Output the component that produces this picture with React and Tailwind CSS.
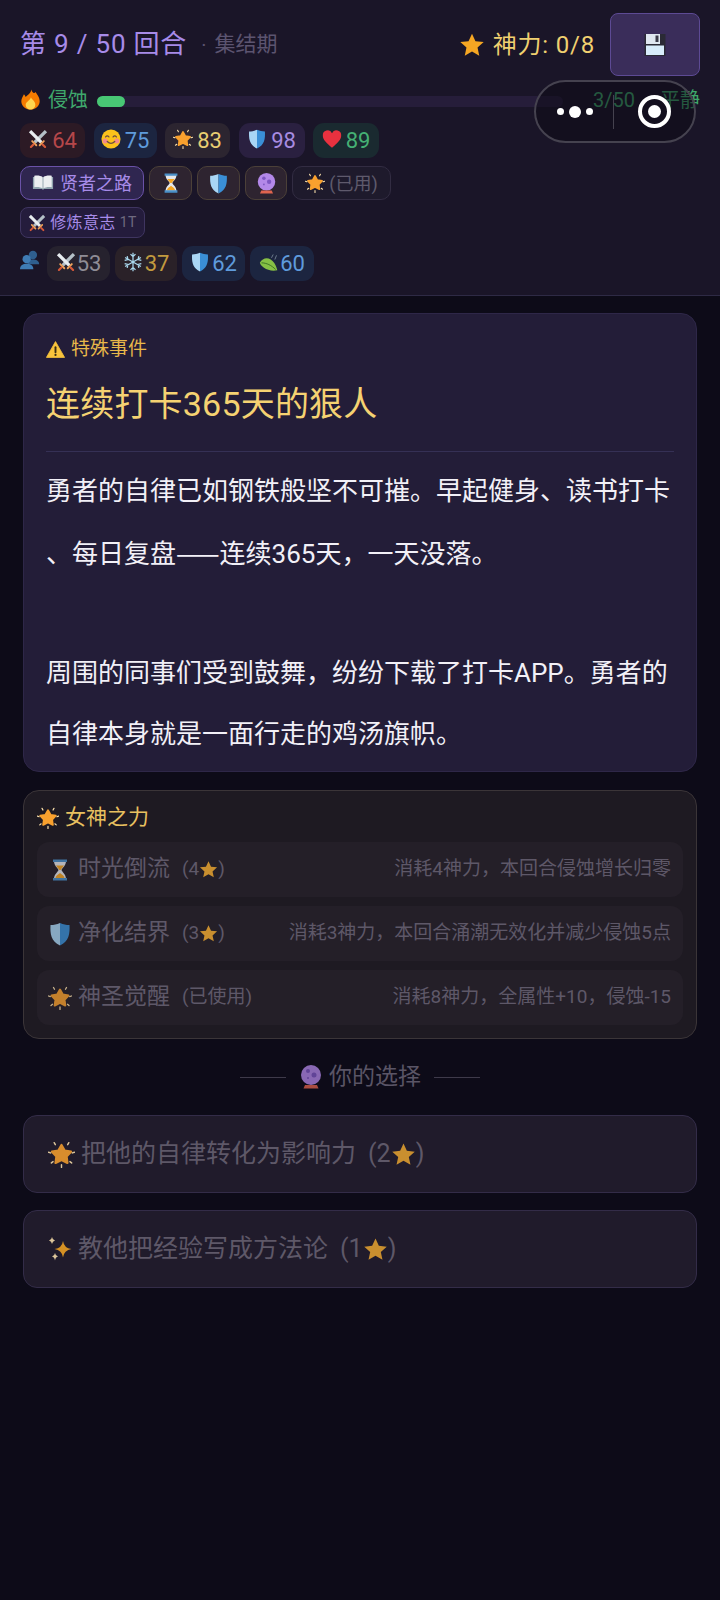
import React from 'react';

const font = { fontFamily: 'Roboto, "Noto Sans CJK SC", sans-serif' };

const Star = ({ s = 24, className = '', fill = '#f5a623' }) => (
  <svg width={s} height={s} viewBox="0 0 24 24" className={`inline-block shrink-0 ${className}`}>
    <path d="M12 1.500l3.200 7 7.600.8-5.700 5.100 1.600 7.500L12 18l-6.700 3.900 1.600-7.500L1.200 9.300l7.600-.8z" fill={fill} />
  </svg>
);

const Glow = ({ s = 24, className = '' }) => (
  <svg width={s} height={s} viewBox="0 0 24 24" className={`inline-block shrink-0 ${className}`}>
    <path d="M12 3.500l2.800 5 5.700 1-4 4.200.8 5.800-5.300-2.600-5.300 2.600.8-5.800-4-4.200 5.700-1z" fill="#f9a12e" stroke="#f9a12e" strokeWidth="2" strokeLinejoin="round" />
    <path d="M12 21v2.500M.5 10l1.800.6M21.700 10.600l1.800-.6M3 19.500l1.500-1.200M21 19.500l-1.500-1.200M5.500 1.500l1 1.800M18.500 1.500l-1 1.800" stroke="#fde3ae" strokeWidth="1.300" strokeLinecap="round" />
  </svg>
);

const Swords = ({ s = 24, className = '' }) => (
  <svg width={s} height={s} viewBox="0 0 24 24" className={`inline-block shrink-0 ${className}`}>
    <path d="M21.500 2.500L8 16" stroke="#b4c0c7" strokeWidth="4" />
    <path d="M2.500 2.500L16 16" stroke="#e8edf0" strokeWidth="4" />
    <path d="M5 14.500l5 5M19 14.500l-5 5" stroke="#eea35c" strokeWidth="2.200" strokeLinecap="round" />
    <path d="M6.500 18.500l-3 3M17.500 18.500l3 3" stroke="#d65a3a" strokeWidth="2.600" strokeLinecap="round" />
  </svg>
);

const Smile = ({ s = 24, className = '' }) => (
  <svg width={s} height={s} viewBox="0 0 24 24" className={`inline-block shrink-0 ${className}`}>
    <circle cx="12" cy="12" r="11.500" fill="#fcc21b" />
    <circle cx="5" cy="14.500" r="3" fill="#f48a8a" />
    <circle cx="19" cy="14.500" r="3" fill="#f48a8a" />
    <path d="M5.500 9.500q2-2.500 4 0M14.500 9.500q2-2.500 4 0M7.500 15q4.500 4.500 9 0" fill="none" stroke="#6d4c41" strokeWidth="1.500" strokeLinecap="round" />
  </svg>
);

const Shield = ({ s = 24, className = '' }) => (
  <svg width={s} height={s} viewBox="0 0 24 24" className={`inline-block shrink-0 ${className}`}>
    <path d="M12 1C8.500 2.500 6 3 2.500 3 2 12 3 19 12 23.500z" fill="#a9d6f5" />
    <path d="M12 1c3.500 1.500 6 2 9.500 2 .5 9-.5 16-9.500 20.500z" fill="#3a8fd6" />
  </svg>
);

const Heart = ({ s = 24, className = '' }) => (
  <svg width={s} height={s} viewBox="0 0 24 24" className={`inline-block shrink-0 ${className}`}>
    <path d="M12 22.500C5 16.500 1 12.500 1 8A5.800 5.800 0 0 1 12 5a5.800 5.800 0 0 1 11 3c0 4.500-4 8.500-11 14.500z" fill="#e8313f" />
  </svg>
);

const Flame = ({ s = 24, className = '' }) => (
  <svg width={s} height={s} viewBox="0 0 24 24" className={`inline-block shrink-0 ${className}`}>
    <path d="M13 .5c1 4 3 5 5 3 .5 2 4.500 5 4.500 10.500 0 5.500-5 9.500-10.500 9.500S1.500 19.500 1.500 14c0-3.500 2-5.500 3-8 1 1 1.500 2 2 3 2-2 6-4.500 6.500-8.500z" fill="#f57c00" />
    <path d="M12.500 9.500c.5 2.500 5 4 5 8.500 0 3.200-2.800 5.500-5.500 5.500S6.500 21.200 6.500 18c0-3.500 5-4.500 6-8.500z" fill="#ffd54f" />
  </svg>
);

const Hourglass = ({ s = 24, className = '' }) => (
  <svg width={s} height={s} viewBox="0 0 24 24" className={`inline-block shrink-0 ${className}`}>
    <path d="M6 3h12c0 5-4 7-4.500 9 .5 2 4.500 4 4.500 9H6c0-5 4-7 4.500-9C10 10 6 8 6 3z" fill="#e5e7eb" />
    <path d="M8 7.500h8c-1 2-2.800 3-3.300 4.500h-1.400C10.800 10.500 9 9.500 8 7.500zM7.500 20c.5-3 3-3.500 4.500-5 1.500 1.500 4 2 4.500 5z" fill="#f5a623" />
    <path d="M5 1.500h14v2.500H5zM5 20h14v2.500H5z" fill="#4a90c8" />
  </svg>
);

const Ball = ({ s = 24, className = '' }) => (
  <svg width={s} height={s} viewBox="0 0 24 24" className={`inline-block shrink-0 ${className}`}>
    <circle cx="12" cy="10" r="10" fill="#b388e8" />
    <circle cx="9" cy="6" r="2" fill="#7e57c2" />
    <circle cx="15" cy="10" r="2.500" fill="#7e57c2" />
    <circle cx="9" cy="13" r="1" fill="#7e57c2" />
    <path d="M6 20h12l1.500 3.500h-15z" fill="#e0644f" />
  </svg>
);

const Book = ({ s = 24, className = '' }) => (
  <svg width={s} height={s} viewBox="0 0 24 24" className={`inline-block shrink-0 ${className}`}>
    <path d="M1 5.500h10.500l.5 1 .5-1H23v13H13l-1 1-1-1H1z" fill="#90a4ae" />
    <path d="M2.500 4c4-.5 7 0 9 1.500V18c-2-1.500-5-2-9-1.500zM21.500 4c-4-.5-7 0-9 1.500V18c2-1.500 5-2 9-1.500z" fill="#eceff1" />
  </svg>
);

const Floppy = ({ s = 24, className = '' }) => (
  <svg width={s} height={s} viewBox="0 0 24 24" className={`inline-block shrink-0 ${className}`}>
    <path d="M1.500 1h21v22h-21z" fill="#2a2a35" />
    <path d="M3 1h14v10H3z" fill="#dfe7f0" />
    <path d="M12.500 2.500h3v6.500h-3z" fill="#3a3a48" />
    <path d="M3 12.500h18V22H3z" fill="#d7ecfa" />
  </svg>
);

const Warn = ({ s = 20, className = '' }) => (
  <svg width={s} height={s} viewBox="0 0 24 24" className={`inline-block shrink-0 ${className}`}>
    <path d="M12 2L23.500 22H.5z" fill="#f8c33c" stroke="#f8c33c" strokeLinejoin="round" />
    <path d="M12 9v6.500" stroke="#3a2d12" strokeWidth="2.400" strokeLinecap="round" />
    <circle cx="12" cy="18.800" r="1.400" fill="#3a2d12" />
  </svg>
);

const Snow = ({ s = 24, className = '' }) => (
  <svg width={s} height={s} viewBox="0 0 24 24" className={`inline-block shrink-0 ${className}`}>
    <path d="M12 1v22M2.500 6.500l19 11M21.500 6.500l-19 11M9 2.500l3 3 3-3M9 21.500l3-3 3 3M2 10l4-1-1-4M22 14l-4 1 1 4M22 10l-4-1 1-4M2 14l4 1-1 4" fill="none" stroke="#a9d8ee" strokeWidth="1.500" />
  </svg>
);

const Leaf = ({ s = 24, className = '' }) => (
  <svg width={s} height={s} viewBox="0 0 24 24" className={`inline-block shrink-0 ${className}`}>
    <path d="M1 13C4 7 10 6 14 9c3 2 6 5 8 13-6 1-12 0-16-3-2-1.500-4-3-5-6z" fill="#86bf45" />
    <path d="M3 13c6 0 12 3 17 8" fill="none" stroke="#33691e" strokeWidth="1" />
    <path d="M15 7l2-4M19 9l2-5" stroke="#7a8a99" strokeWidth="1" />
  </svg>
);

const Sparkles = ({ s = 24, className = '' }) => (
  <svg width={s} height={s} viewBox="0 0 24 24" className={`inline-block shrink-0 ${className}`}>
    <path d="M15 4q1 7 8.500 8-7.500 1-8.500 8.500Q14 13 6.500 12 14 11 15 4z" fill="#f5a623" />
    <path d="M4 0q.5 3 3 3.500-2.500.5-3 3.500-.5-3-3-3.500 2.500-.5 3-3.500zM7 16q.5 3 3 3.500-2.500.5-3 4-.5-3.500-3-4 2.500-.5 3-3.500z" fill="#fde3ae" />
  </svg>
);

const Busts = ({ s = 24, className = '' }) => (
  <svg width={s} height={s} viewBox="0 0 24 24" className={`inline-block shrink-0 ${className}`}>
    <circle cx="15.500" cy="6" r="5" fill="#2f5f8f" />
    <path d="M9 17c0-4 3-5.500 6.500-5.500S23 13 23 17z" fill="#2f5f8f" />
    <circle cx="8" cy="11" r="5" fill="#3f7cb5" />
    <path d="M0 23c0-4.500 3.500-6.500 8-6.500s8 2 8 6.500z" fill="#3f7cb5" />
  </svg>
);

const heroStats = [
  { Icon: Swords, value: '64', cls: 'w-[65px] gap-[4px] bg-[#2c1a25] text-[#b5474a]' },
  { Icon: Smile, value: '75', cls: 'w-[63px] gap-[4px] bg-[#1c2540] text-[#5f9bdc]' },
  { Icon: Glow, value: '83', cls: 'w-[65px] gap-[4px] bg-[#2c2530] text-[#e8cd72]' },
  { Icon: Shield, value: '98', cls: 'w-[66px] gap-[4px] bg-[#2a2040] text-[#a78be0]' },
  { Icon: Heart, value: '89', cls: 'w-[66px] gap-[4px] bg-[#1a2a30] text-[#45b074]' },
];

const allyStats = [
  { Icon: Swords, value: '53', cls: 'w-[63px] gap-[1px] bg-[#26222e] text-[#8f8d96]' },
  { Icon: Snow, value: '37', cls: 'w-[62px] gap-[2px] bg-[#2a2128] text-[#c29a3f]' },
  { Icon: Shield, value: '62', cls: 'w-[63px] gap-[2px] bg-[#1c2540] text-[#5f9bdc]' },
  { Icon: Leaf, value: '60', cls: 'w-[64px] gap-[1px] bg-[#1c2540] text-[#5f9bdc]' },
];

const powers = [
  { Icon: Hourglass, size: 24, name: '时光倒流', cost: '4', desc: '消耗4神力，本回合侵蚀增长归零' },
  { Icon: Shield, size: 24, name: '净化结界', cost: '3', desc: '消耗3神力，本回合涌潮无效化并减少侵蚀5点' },
  { Icon: Glow, size: 24, name: '神圣觉醒', desc: '消耗8神力，全属性+10，侵蚀-15' },
];

const StatChip = ({ stat }) => (
  <div className={`flex h-[35px] items-center justify-center rounded-[11px] text-[22px] ${stat.cls}`}>
    <stat.Icon s={20} className="-mt-[3px]" />
    <span>{stat.value}</span>
  </div>
);

const Tag = ({ className, children }) => (
  <div className={`flex h-[34px] items-center justify-center rounded-[10px] border ${className}`}>{children}</div>
);

export default function App() {
  return (
    <div className="relative h-[1600px] w-[720px] overflow-hidden bg-[#0d0b18]" style={font}>
      <header className="h-[296px] whitespace-nowrap border-b border-[#2e2a45] bg-[#1a1528] pl-5 pr-5 pt-[13px]">
        <div className="flex h-[63px] items-center">
          <span className="text-[26px] tracking-[0.8px] text-[#a78be8]">第 9 / 50 回合</span>
          <span className="ml-[14px] text-[20px] text-[#5c5470]">·</span>
          <span className="ml-[8px] text-[21px] text-[#5c5470]">集结期</span>
          <div className="ml-auto flex items-center gap-2 text-[24px] tracking-[0.8px] text-[#f0d070]">
            <Star s={26} />
            <span>神力: 0/8</span>
          </div>
          <button className="ml-[15px] flex h-[63px] w-[90px] items-center justify-center rounded-[8px] border border-[#5d4a94] bg-[#3a2d5a]">
            <Floppy s={24} />
          </button>
        </div>
        <div className="mt-[9px] flex h-[30px] items-center">
          <Flame s={21} className="-mt-px" />
          <span className="ml-[7px] text-[20px] text-[#3fa86c]">侵蚀</span>
          <div className="ml-[9px] mt-[3px] h-[11px] w-[466px] shrink-0 rounded-full bg-[#261d3a]">
            <div className="h-full w-[28px] rounded-full bg-[#48c774]" />
          </div>
          <span className="ml-[30px] text-[20px] text-[#3fa86c]">3/50</span>
          <span className="ml-[25px] text-[20px] text-[#3fa86c]">平静</span>
        </div>
        <div className="mt-[8px] flex gap-[8.5px]">
          {heroStats.map((stat) => (
            <StatChip key={stat.value} stat={stat} />
          ))}
        </div>
        <div className="mt-[8px] flex gap-[5px]">
          <Tag className="w-[124px] gap-[6px] border-[#6a52a8] bg-[#2f2650] text-[18px] text-[#a78be8]">
            <Book s={22} />
            <span>贤者之路</span>
          </Tag>
          <Tag className="w-[43px] border-[#4b4038] bg-[#2e2430]"><Hourglass s={22} /></Tag>
          <Tag className="w-[43px] border-[#4b4038] bg-[#2e2430]"><Shield s={21} /></Tag>
          <Tag className="w-[42px] border-[#4b4038] bg-[#2e2430]"><Ball s={21} /></Tag>
          <Tag className="w-[99px] gap-1 border-[#322c42] bg-[#1e1a2c] text-[18px] text-[#5f5a6c]">
            <Glow s={20} />
            <span>(已用)</span>
          </Tag>
        </div>
        <div className="mt-[7px] flex">
          <div className="flex h-[31px] w-[125px] items-center justify-center gap-1 rounded-[8px] border border-[#3f3560] bg-[#241c3c] text-[16px] tracking-[0.4px] text-[#a78be8]">
            <Swords s={18} />
            <span>修炼意志</span>
            <span className="text-[14px] text-[#6f6a80]">1T</span>
          </div>
        </div>
        <div className="mt-[8px] flex items-center">
          <Busts s={20} className="-mt-2" />
          <div className="ml-[7px] flex gap-[5px]">
            {allyStats.map((stat) => (
              <StatChip key={stat.value} stat={stat} />
            ))}
          </div>
        </div>
      </header>

      {/* WeChat capsule sits on top of the header */}
      <div className="absolute left-[534px] top-[80px] flex h-[63px] w-[162px] items-center rounded-full border-2 border-[#45424f] bg-[#0b0a13]/50">
        <div className="flex w-[77px] items-center justify-center gap-[5px]">
          <span className="h-[7px] w-[7px] rounded-full bg-white" />
          <span className="h-[12px] w-[12px] rounded-full bg-white" />
          <span className="h-[7px] w-[7px] rounded-full bg-white" />
        </div>
        <div className="h-[34px] w-px bg-[#45424f]" />
        <div className="flex flex-1 items-center justify-center">
          <div className="flex h-[33px] w-[33px] items-center justify-center rounded-full border-[4px] border-white">
            <span className="h-[13px] w-[13px] rounded-full bg-white" />
          </div>
        </div>
      </div>

      <main className="flex flex-col px-[23px] pt-[17px]">
        <section className="h-[459px] rounded-[16px] border border-[#2e2748] bg-[#231d38] px-[22px] pt-[22px]">
          <div className="flex h-[26px] items-center gap-[6px] text-[19px] text-[#e8b84a]">
            <Warn s={19} />
            <span>特殊事件</span>
          </div>
          <h1 className="mt-[19px] text-[34px] font-normal leading-[46px] tracking-[0.2px] text-[#f5d272]">连续打卡365天的狠人</h1>
          <div className="mt-[24px] h-px bg-[#353055]" />
          <div className="mt-[9px] whitespace-nowrap text-[26px] leading-[60.5px] text-[#f2f0f7]">
            <p>勇者的自律已如钢铁般坚不可摧。早起健身、读书打卡</p>
            <p>、每日复盘<span className="font-['Noto_Sans_CJK_SC']">——</span>连续365天，一天没落。</p>
            <p className="h-[59px]">&nbsp;</p>
            <p>周围的同事们受到鼓舞，纷纷下载了打卡APP。勇者的</p>
            <p>自律本身就是一面行走的鸡汤旗帜。</p>
          </div>
        </section>

        <section className="mt-[18px] h-[249px] rounded-[16px] border border-[#3b3538] bg-[#1e1a22] px-[13px] pt-[13px]">
          <div className="flex h-[28px] items-center gap-[6px] text-[21px] text-[#e8c060]">
            <Glow s={22} />
            <span>女神之力</span>
          </div>
          <div className="mt-[10px] flex flex-col gap-[9px]">
            {powers.map((p) => (
              <div key={p.name} className="flex h-[55px] items-center rounded-[12px] bg-[#241f28] pl-[11px] pr-3 text-[#5e5868]">
                <span className="flex w-[24px] justify-center opacity-75">
                  <p.Icon s={p.size} />
                </span>
                <span className="ml-[6px] text-[23px]">{p.name}</span>
                <span className="ml-[12px] flex items-center text-[19px]">
                  {p.cost ? (
                    <>
                      ({p.cost}
                      <Star s={19} fill="#c98f2f" />)
                    </>
                  ) : (
                    '(已使用)'
                  )}
                </span>
                <span className="ml-auto text-[19px]">{p.desc}</span>
              </div>
            ))}
          </div>
        </section>

        <div className="mt-[24px] flex h-[28px] items-center justify-center text-[23px] text-[#5a5566]">
          <span className="h-px w-[46px] bg-[#3e3a4a]" />
          <Ball s={24} className="ml-[13px] opacity-75" />
          <span className="ml-[6px]">你的选择</span>
          <span className="ml-[13px] h-px w-[46px] bg-[#3e3a4a]" />
        </div>

        <button className="mt-[24px] flex h-[78px] items-center rounded-[14px] border border-[#332c48] bg-[#201b2b] pl-[24px] text-[25px] text-[#5e5868]">
          <Glow s={27} className="opacity-85" />
          <span className="ml-[6px] flex items-center">
            把他的自律转化为影响力
            <span className="ml-[12px]">(2</span>
            <Star s={25} fill="#c98f2f" />)
          </span>
        </button>
        <button className="mt-[17px] flex h-[78px] items-center rounded-[14px] border border-[#332c48] bg-[#201b2b] pl-[24px] text-[25px] text-[#5e5868]">
          <Sparkles s={24} className="opacity-85" />
          <span className="ml-[6px] flex items-center">
            教他把经验写成方法论
            <span className="ml-[12px]">(1</span>
            <Star s={25} fill="#c98f2f" />)
          </span>
        </button>
      </main>
    </div>
  );
}
